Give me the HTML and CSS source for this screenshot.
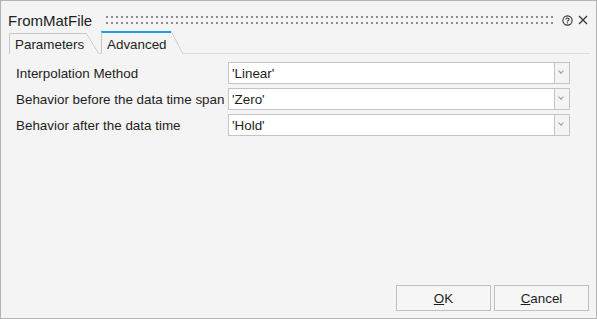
FILE: index.html
```html
<!DOCTYPE html>
<html lang="en">

<head>
  <meta charset="UTF-8">
  <title>FromMatFile</title>
  <link rel="stylesheet" href="styles.css">
</head>

<body>
  <div class="dialog">
    <div class="titlebar">
      <span class="title">FromMatFile</span>
      <div class="grip"></div>
      <svg class="help" width="11" height="11" viewBox="0 0 11 11">
        <circle cx="5.5" cy="5.5" r="4.6" fill="none" stroke="#333" stroke-width="1.1"/>
        <path d="M3.9 4.4 Q3.9 3 5.5 3 Q7.1 3 7.1 4.3 Q7.1 5.1 6.1 5.5 Q5.5 5.8 5.5 6.5" fill="none" stroke="#333" stroke-width="1.1"/>
        <rect x="4.95" y="7.3" width="1.1" height="1.1" fill="#333"/>
      </svg>
      <svg class="close" width="10" height="10" viewBox="0 0 10 10">
        <path d="M1 1 L9 9 M9 1 L1 9" stroke="#333" stroke-width="1.2"/>
      </svg>
    </div>

    <div class="tabs">
      <div class="tab">Parameters</div>
      <div class="tab active">Advanced</div>
    </div>

    <div class="form">
      <label>Interpolation Method</label>
      <div class="combo">
        <div class="value">'Linear'</div>
        <div class="arrow"></div>
      </div>

      <label>Behavior before the data time span</label>
      <div class="combo">
        <div class="value">'Zero'</div>
        <div class="arrow"></div>
      </div>

      <label>Behavior after the data time</label>
      <div class="combo">
        <div class="value">'Hold'</div>
        <div class="arrow"></div>
      </div>
    </div>

    <div class="buttons">
      <button type="button"><u>O</u>K</button>
      <button type="button"><u>C</u>ancel</button>
    </div>
  </div>
</body>

</html>
```

FILE: styles.css
```css
* {
  box-sizing: border-box;
}
body {
  margin: 0;
  padding: 0;
  font-family: 'Liberation Sans', Arial, sans-serif;
  font-size: 13.4px;
  color: #1e1e1e;
  background-color: #f4f4f4;
}
.dialog {
  height: 100vh;
  border: 1px solid #b4b4b4;
  background-color: #f4f4f4;
  display: flex;
  flex-direction: column;
}
.titlebar {
  display: flex;
  align-items: center;
  height: 30px;
  padding: 8px 8px 0 7px;
}
.title {
  font-size: 15px;
  color: #222;
}
.grip {
  flex: 1;
  height: 8px;
  margin: 0 8px 0 14px;
  background-color: #8c8c8c;
  background-image:
    linear-gradient(90deg, transparent 2px, #f4f4f4 2px),
    linear-gradient(transparent 2px, #f4f4f4 2px);
  background-size: 5px 100%, 100% 6px;
}
.help {
  margin-right: 5px;
}
.tabs {
  display: flex;
  align-items: flex-end;
  height: 23px;
  margin: 0 6px 0 8px;
  border-bottom: 1px solid #dcdcdc;
}
.tab {
  position: relative;
  height: 21px;
  padding: 3px 0 0 5px;
  width: 77px;
  margin-right: 15px;
  border-left: 1px solid #c8c8c8;
  border-top: 1px solid #c8c8c8;
  margin-bottom: -1px;
  background-color: #f4f4f4;
}
.tab::after {
  content: '';
  position: absolute;
  top: -1px;
  right: -13px;
  width: 13px;
  height: 21px;
  background: linear-gradient(to top right, #f4f4f4 calc(50% - 0.7px), #c8c8c8 50%, transparent calc(50% + 0.7px));
}
.tab.active {
  height: 23px;
  width: 70px;
  padding-top: 4px;
  border-top: 2px solid #1a9ee2;
  margin-right: 0;
}
.tab.active::after {
  top: -2px;
  height: 23px;
  width: 12px;
  right: -12px;
}
.form {
  display: grid;
  grid-template-columns: 212px 1fr;
  grid-auto-rows: 22px;
  row-gap: 4px;
  padding: 8px 26px 0 15px;
}
label {
  display: flex;
  align-items: center;
  white-space: nowrap;
}
.combo {
  display: flex;
}
.value {
  flex: 1;
  display: flex;
  align-items: center;
  padding-left: 3px;
  background-color: #fff;
  border: 1px solid #c4c4c4;
}
.arrow {
  width: 15px;
  border: 1px solid #c4c4c4;
  border-left: none;
  background-color: #f4f4f4;
  position: relative;
}
.arrow::before {
  content: '';
  position: absolute;
  left: 4px;
  top: 6px;
  width: 3px;
  height: 3px;
  border-right: 1.5px solid #9a9a9a;
  border-bottom: 1.5px solid #9a9a9a;
  transform: rotate(45deg);
}
.buttons {
  margin-top: auto;
  display: flex;
  justify-content: flex-end;
  gap: 3px;
  padding: 0 7px 7px 0;
}
button {
  width: 95px;
  height: 26px;
  font-family: inherit;
  font-size: 13.4px;
  color: #1e1e1e;
  background-color: #f6f6f6;
  border: 1px solid #c0c0c0;
  border-radius: 0;
  padding: 0;
}
```
